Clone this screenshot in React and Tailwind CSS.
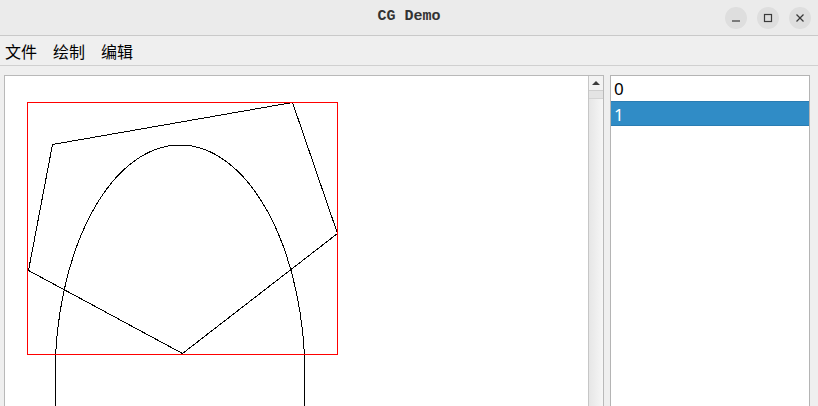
import React from 'react';

const items = ['0', '1'];

const WinButton = ({ children }) => (
  <div className="w-[22px] h-[22px] rounded-full bg-[#dedede] flex items-center justify-center">
    <svg width="10" height="10" viewBox="0 0 10 10" fill="none" stroke="#3a3a3a" strokeWidth="1.2">
      {children}
    </svg>
  </div>
);

const Canvas = () => (
  <svg width="583" height="340" viewBox="5 76 583 340" shapeRendering="crispEdges" className="block">
    <ellipse cx="180" cy="377" rx="125" ry="232" fill="none" stroke="#000" strokeWidth="1" />
    <polygon
      points="52.5,144.5 292.5,102.5 337.5,233.5 182.5,353.5 28.5,270.5"
      fill="none"
      stroke="#000"
      strokeWidth="1"
    />
    <rect x="27.5" y="102.5" width="310" height="252" fill="none" stroke="#ff0000" strokeWidth="1" />
  </svg>
);

export default function App() {
  return (
    <div className="w-[818px] h-[406px] overflow-hidden bg-[#efefef] flex flex-col">
      {/* title bar */}
      <div className="h-[36px] shrink-0 bg-[#ebebeb] border-b border-[#c9c9c9] grid grid-cols-[1fr_auto_1fr] items-center">
        <div />
        <div className="font-['Liberation_Mono',monospace] font-bold text-[15px] text-[#333] pb-[1px]">CG Demo</div>
        <div className="flex justify-end gap-[10px] pr-[7px]">
          <WinButton>
            <line x1="1" y1="8" x2="9" y2="8" />
          </WinButton>
          <WinButton>
            <rect x="1.5" y="1.5" width="7" height="7" />
          </WinButton>
          <WinButton>
            <line x1="1.5" y1="1.5" x2="8.5" y2="8.5" />
            <line x1="8.5" y1="1.5" x2="1.5" y2="8.5" />
          </WinButton>
        </div>
      </div>

      {/* menu bar */}
      <div className="h-[30px] shrink-0 border-b border-[#d0d0d0] flex items-center gap-[16px] pl-[5px] font-['Noto_Sans_CJK_SC',sans-serif] text-[16px] text-black">
        <span>文件</span>
        <span>绘制</span>
        <span>编辑</span>
      </div>

      {/* content */}
      <div className="flex-1 flex gap-[6px] pt-[9px] pl-[4px] min-h-0">
        <div className="w-[600px] border border-b-0 border-[#b9b9b9] bg-white flex">
          <div className="flex-1 overflow-hidden">
            <Canvas />
          </div>
          <div className="w-[15px] border-l border-[#c6c6c6] bg-[#f3f3f3] flex flex-col">
            <div className="h-[14px] flex items-center justify-center">
              <div className="w-0 h-0 border-l-[4px] border-r-[4px] border-b-[4px] border-l-transparent border-r-transparent border-b-[#3c3c3c]" />
            </div>
            <div className="flex-1 border-t border-[#cfcfcf] bg-gradient-to-r from-[#e6e6e6] to-[#f6f6f6]">
              <div className="h-[8px] border-b border-[#d4d4d4] bg-[#e4e4e4]" />
            </div>
          </div>
        </div>

        <div className="w-[200px] border border-b-0 border-[#b4b4b4] bg-white font-['Noto_Sans',sans-serif] text-[17px]">
          {items.map((it, i) => (
            <div
              key={it}
              className={
                i === 1
                  ? 'h-[25px] leading-[25px] pl-[3px] bg-[#308cc6] border-y border-[#2a7db3] text-white leading-[23px]'
                  : 'h-[25px] leading-[25px] pl-[3px] text-black'
              }
            >
              {it}
            </div>
          ))}
        </div>
      </div>
    </div>
  );
}
